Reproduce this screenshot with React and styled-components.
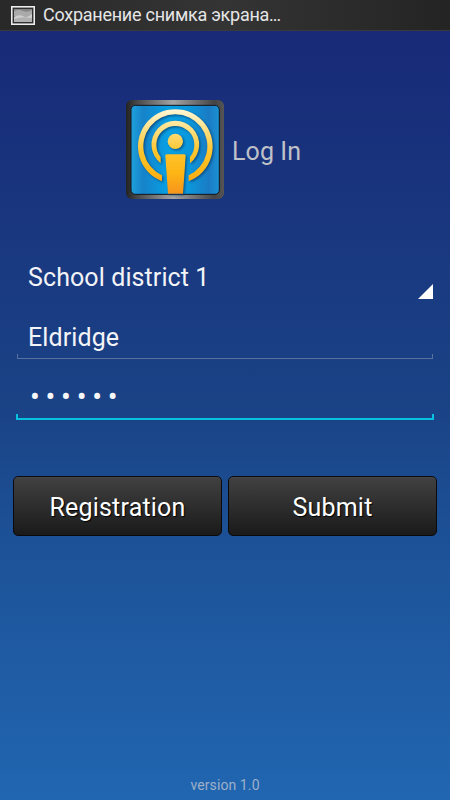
import { styled, createGlobalStyle } from "styled-components";

const GlobalStyle = createGlobalStyle`
    * {
        box-sizing: border-box;
    }

    body {
        margin: 0;
        font-family: Roboto, "Noto Sans", sans-serif;
    }
`

const Screen = styled.div`
    display: flex;
    flex-direction: column;
    width: 100%;
    height: 800px;
    overflow: hidden;
    background: linear-gradient(#182a78 31px, #1a4285 400px, #1d5399 560px, #2166b1 100%);
`

const StatusBar = styled.header`
    display: flex;
    align-items: center;
    gap: 8px;
    height: 31px;
    padding: 1px 0 0 11px;
    flex-shrink: 0;
    background: linear-gradient(90deg, #292929, #343434 50%, #242424);
    border-bottom: 1px solid #3a3a3a;
`

const StatusText = styled.span`
    color: #e6e6e6;
    font-size: 18px;
    line-height: 30px;
    padding-bottom: 2px;
    letter-spacing: -0.26px;
    white-space: nowrap;
`

const Ellipsis = styled.span`
    letter-spacing: -1px;
`

const Brand = styled.div`
    display: flex;
    align-items: center;
    gap: 8px;
    height: 99px;
    margin: 69px 0 0 126px;

    svg {
        flex-shrink: 0;
    }
`

const Title = styled.h1`
    margin: 5px 0 0;
    color: #bfc1c9;
    font-size: 25px;
    font-weight: 400;
    line-height: 30px;
    letter-spacing: 0.1px;
    white-space: nowrap;
`

const Form = styled.form`
    display: flex;
    flex-direction: column;
    padding: 0 16px;
    margin-top: 51px;
`

const Spinner = styled.div`
    display: flex;
    justify-content: space-between;
    align-items: flex-end;
    height: 49px;
    padding-left: 12px;
`

const FieldText = styled.span`
    color: #f3f4f7;
    font-size: 25px;
    line-height: 30px;
    letter-spacing: 0.1px;
    white-space: nowrap;
`

const SpinnerLabel = styled(FieldText)`
    align-self: flex-start;
    margin-top: 13px;
`

const Arrow = styled.span`
    width: 15px;
    height: 15px;
    margin-right: 1px;
    background: #fff;
    clip-path: polygon(100% 0, 100% 100%, 0 100%);
`

const Field = styled.div`
    display: flex;
    flex-direction: column;
    height: ${props => props.$height};
    padding: 24px 0 0;
`

const InputText = styled(FieldText)`
    padding-left: 12px;
`

const Underline = styled.div`
    height: ${props => (props.$active ? "6px" : "5px")};
    margin: ${props => (props.$active ? "auto 0 0" : "auto 1px 0")};
    border: ${props => (props.$active ? "2px solid #05c3df" : "1px solid #58719f")};
    border-top: 0;
`

const Dots = styled.div`
    display: flex;
    height: 30px;
    padding-left: 11px;
`

const Dot = styled.span`
    width: 15.6px;
    color: #f7f7f9;
    font-size: 29px;
    line-height: 29px;
    text-align: center;
`

const Buttons = styled.div`
    display: flex;
    gap: 6px;
    padding: 0 13px;
    margin-top: 56px;
`

const Button = styled.button`
    flex: 1;
    height: 60px;
    padding: 4px 0 0;
    border: 1px solid #0a0a0c;
    border-radius: 5px;
    background: linear-gradient(#414141, #1a1a1a);
    box-shadow: inset 0 1px 0 #484848;
    color: #fff;
    font-family: inherit;
    font-size: 25px;
    line-height: 30px;
    letter-spacing: 0.2px;
    text-shadow: 1px 1px 1px #000;
`

const Version = styled.footer`
    margin-top: auto;
    padding-bottom: 5px;
    color: #9eb0c9;
    font-size: 14px;
    line-height: 20px;
    letter-spacing: 0.1px;
    text-align: center;
`

const PictureIcon = () => (
    <svg width="24" height="19" viewBox="0 0 24 19">
        <rect x="0.75" y="0.75" width="22.5" height="17.5" fill="#4a4a4a" stroke="#ededed" strokeWidth="1.5" />
        <rect x="2.5" y="2.5" width="19" height="14" fill="#858585" stroke="#303030" />
        <path d="M3 5 Q8 3 12 5 T21 4 V9 Q15 12 3 10Z" fill="#aaa" />
        <path d="M3 11 Q8 8 12 10 T21 8 V13 H3Z" fill="#cecece" />
        <path d="M3 13 Q10 10 21 12 V16 H3Z" fill="#b1b1b1" />
    </svg>
)

const Logo = () => (
    <svg width="98" height="99" viewBox="33 30 294 297">
        <defs>
            <linearGradient id="frame" x1="0" y1="0" x2="1" y2="0">
                <stop offset="0" stopColor="#222" />
                <stop offset="0.1" stopColor="#444" />
                <stop offset="0.48" stopColor="#a5a5a5" />
                <stop offset="0.9" stopColor="#444" />
                <stop offset="1" stopColor="#555" />
            </linearGradient>
            <linearGradient id="sky" x1="0" y1="0" x2="1" y2="0">
                <stop offset="0" stopColor="#1fa0dc" />
                <stop offset="0.14" stopColor="#1683ca" />
                <stop offset="0.42" stopColor="#08a0e4" />
                <stop offset="0.65" stopColor="#0b98dc" />
                <stop offset="0.88" stopColor="#1a7cc4" />
                <stop offset="1" stopColor="#1b91d3" />
            </linearGradient>
            <linearGradient id="gold" gradientUnits="userSpaceOnUse" x1="0" y1="57" x2="0" y2="312">
                <stop offset="0" stopColor="#fff7d8" />
                <stop offset="0.22" stopColor="#ffe28a" />
                <stop offset="0.5" stopColor="#fdc52d" />
                <stop offset="0.75" stopColor="#fdb515" />
                <stop offset="1" stopColor="#f7941d" />
            </linearGradient>
            <filter id="shade" x="-10%" y="-10%" width="125%" height="125%" colorInterpolationFilters="sRGB">
                <feDropShadow dx="4" dy="4" stdDeviation="3" floodColor="#063d70" floodOpacity="0.75" />
            </filter>
        </defs>
        <rect x="33" y="30" width="294" height="297" rx="18" fill="url(#frame)" />
        <rect x="48" y="46" width="265" height="267" rx="13" fill="url(#sky)" stroke="#10151c" strokeWidth="3" />
        <g fill="url(#gold)" filter="url(#shade)">
            <path d="M141 274 A112 112 0 1 1 221 274 V256 A96 96 0 1 0 141 256Z" />
            <path d="M137 220 A71.5 71.5 0 1 1 225 220 V201 A57 57 0 1 0 137 201Z" />
            <circle cx="181" cy="154" r="23" />
            <path d="M155 193 H208 Q213 193 212 198 L204 311 H159 L151 198 Q150 193 155 193Z" />
        </g>
    </svg>
)

const App = () => {
    return (
        <>
            <GlobalStyle />
            <Screen>
                <StatusBar>
                    <PictureIcon />
                    <StatusText>Сохранение снимка экрана<Ellipsis>...</Ellipsis></StatusText>
                </StatusBar>
                <Brand>
                    <Logo />
                    <Title>Log In</Title>
                </Brand>
                <Form>
                    <Spinner>
                        <SpinnerLabel>School district 1</SpinnerLabel>
                        <Arrow />
                    </Spinner>
                    <Field $height="60px">
                        <InputText>Eldridge</InputText>
                        <Underline />
                    </Field>
                    <Field $height="61px">
                        <Dots>
                            {Array.from({ length: 6 }, (_, i) => <Dot key={i}>•</Dot>)}
                        </Dots>
                        <Underline $active />
                    </Field>
                </Form>
                <Buttons>
                    <Button type="button">Registration</Button>
                    <Button type="button">Submit</Button>
                </Buttons>
                <Version>version 1.0</Version>
            </Screen>
        </>
    )
}

export default App;
